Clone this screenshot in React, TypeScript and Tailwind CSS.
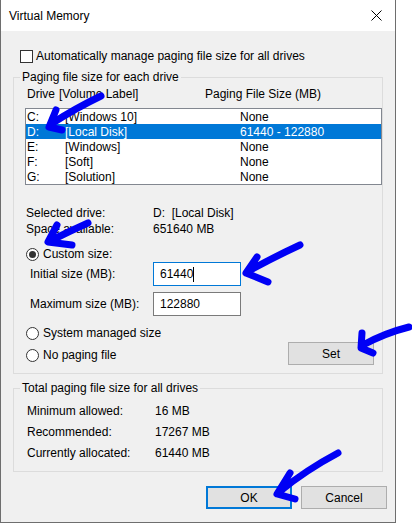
export default function App() {
  return (
    <div className="relative w-[412px] h-[523px] bg-white text-[12px] text-black" style={{ fontFamily: '"Liberation Sans", Arial, sans-serif' }}>
      <Dialog />
      <Arrows />
    </div>
  );
}

function Radio({ checked }: { checked?: boolean }) {
  return (
    <span className="w-[13px] h-[13px] rounded-full border border-[#333] bg-white flex items-center justify-center shrink-0">
      {checked && <span className="w-[7px] h-[7px] rounded-full bg-[#333]" />}
    </span>
  );
}

function Dialog() {
  const drives = [
    { d: 'C:', label: '[Windows 10]', size: 'None' },
    { d: 'D:', label: '[Local Disk]', size: '61440 - 122880', sel: true },
    { d: 'E:', label: '[Windows]', size: 'None' },
    { d: 'F:', label: '[Soft]', size: 'None' },
    { d: 'G:', label: '[Solution]', size: 'None' },
  ];

  return (
    <div className="w-[396px] h-[523px] flex flex-col bg-[#f0f0f0] border-l border-r border-b border-[#6e6e6e]">
      {/* title bar */}
      <div className="h-[31px] bg-white flex items-center justify-between pl-[8px] pr-[10px] shrink-0">
        <span>Virtual Memory</span>
        <svg width="11" height="11" viewBox="0 0 11 11" className="mr-[3px]">
          <path d="M0.5 0.5 L10.5 10.5 M10.5 0.5 L0.5 10.5" stroke="#000" strokeWidth="1" />
        </svg>
      </div>

      {/* auto manage */}
      <div className="mt-[17px] h-4 flex items-center pl-[19px] gap-[3px]">
        <span className="w-[13px] h-[13px] border border-[#333] bg-white shrink-0" />
        <span>Automatically manage paging file size for all drives</span>
      </div>

      {/* group 1 */}
      <fieldset className="mt-[5px] ml-[12px] w-[370px] border border-[#dcdcdc] pb-[8px]">
        <legend className="ml-[6px] px-[2px] leading-4">Paging file size for each drive</legend>

        <div className="mt-[1px] h-4 flex items-center">
          <span className="w-[45px] pl-[13px]">Drive</span>
          <span className="w-[146px]">[Volume Label]</span>
          <span>Paging File Size (MB)</span>
        </div>

        <div className="mt-[6px] ml-[11px] w-[357px] border border-[#828790] bg-white">
          {drives.map((r) => (
            <div key={r.d} className={`h-[15px] flex items-center ${r.sel ? 'bg-[#0078d7] text-white' : ''}`}>
              <span className="w-[39px] pl-[1px]">{r.d}</span>
              <span className="w-[175px]">{r.label}</span>
              <span>{r.size}</span>
            </div>
          ))}
        </div>

        <div className="mt-[20px] pl-[12px] flex flex-col">
          <div className="h-4 flex items-center">
            <span className="w-[127px]">Selected drive:</span>
            <span>D:&nbsp; [Local Disk]</span>
          </div>
          <div className="h-4 flex items-center">
            <span className="w-[127px]">Space available:</span>
            <span>651640 MB</span>
          </div>

          <div className="mt-[9px] h-4 flex items-center gap-[4px]">
            <Radio checked />
            <span>Custom size:</span>
          </div>

          <div className="h-[24px] flex items-center">
            <span className="w-[127px] pl-[4px]">Initial size (MB):</span>
            <div className="w-[88px] h-[24px] bg-white border border-[#0078d7] flex items-center pl-[6px]">
              <span>61440</span>
              <span className="w-px h-[15px] bg-black" />
            </div>
          </div>

          <div className="mt-[6px] h-[24px] flex items-center">
            <span className="w-[127px] pl-[4px]">Maximum size (MB):</span>
            <div className="w-[88px] h-[24px] bg-white border border-[#7a7a7a] flex items-center pl-[6px]">
              <span>122880</span>
            </div>
          </div>

          <div className="mt-[9px] h-4 flex items-center gap-[4px]">
            <Radio />
            <span>System managed size</span>
          </div>

          <div className="mt-[1px] flex items-end justify-between pr-[8px]">
            <div className="h-4 mb-[2px] flex items-center gap-[4px]">
              <Radio />
              <span>No paging file</span>
            </div>
            <button className="w-[86px] h-[23px] bg-[#e1e1e1] border border-[#adadad] flex items-center justify-center">
              Set
            </button>
          </div>
        </div>
      </fieldset>

      {/* group 2 */}
      <fieldset className="mt-[6px] ml-[12px] w-[370px] border border-[#dcdcdc] pb-[8px]">
        <legend className="ml-[6px] px-[2px] leading-4">Total paging file size for all drives</legend>
        <div className="mt-[4px] pl-[13px] flex flex-col">
          {[
            ['Minimum allowed:', '16 MB'],
            ['Recommended:', '17267 MB'],
            ['Currently allocated:', '61440 MB'],
          ].map(([k, v]) => (
            <div key={k} className="h-[21px] flex items-center">
              <span className="w-[128px]">{k}</span>
              <span>{v}</span>
            </div>
          ))}
        </div>
      </fieldset>

      {/* buttons */}
      <div className="mt-[14px] flex justify-end gap-[9px] pr-[8px]">
        <button className="w-[86px] h-[23px] bg-[#e1e1e1] border-2 border-[#0078d7] flex items-center justify-center">
          OK
        </button>
        <button className="w-[86px] h-[23px] bg-[#e1e1e1] border border-[#adadad] flex items-center justify-center">
          Cancel
        </button>
      </div>
    </div>
  );
}

function Arrows() {
  return (
    <svg className="absolute inset-0 pointer-events-none" width="412" height="523" viewBox="0 0 412 523">
      <g fill="none" stroke="#0000f5" strokeWidth="7" strokeLinecap="round" strokeLinejoin="round">
        <path d="M101 96 Q76 108 51 124 M56 110 L49 127 L62 130" />
        <path d="M88 223 Q70 231 52 240 M57 225 L48 242 L72 245" />
        <path d="M300 245 Q272 258 247 272 M257 257 L246 273 L268 282" />
        <path d="M409 327 Q385 333 363 345 M362 333 L361 348 L373 353" />
        <path d="M338 453 Q306 470 279 492 M290 473 L277 494 L295 499" />
      </g>
    </svg>
  );
}
